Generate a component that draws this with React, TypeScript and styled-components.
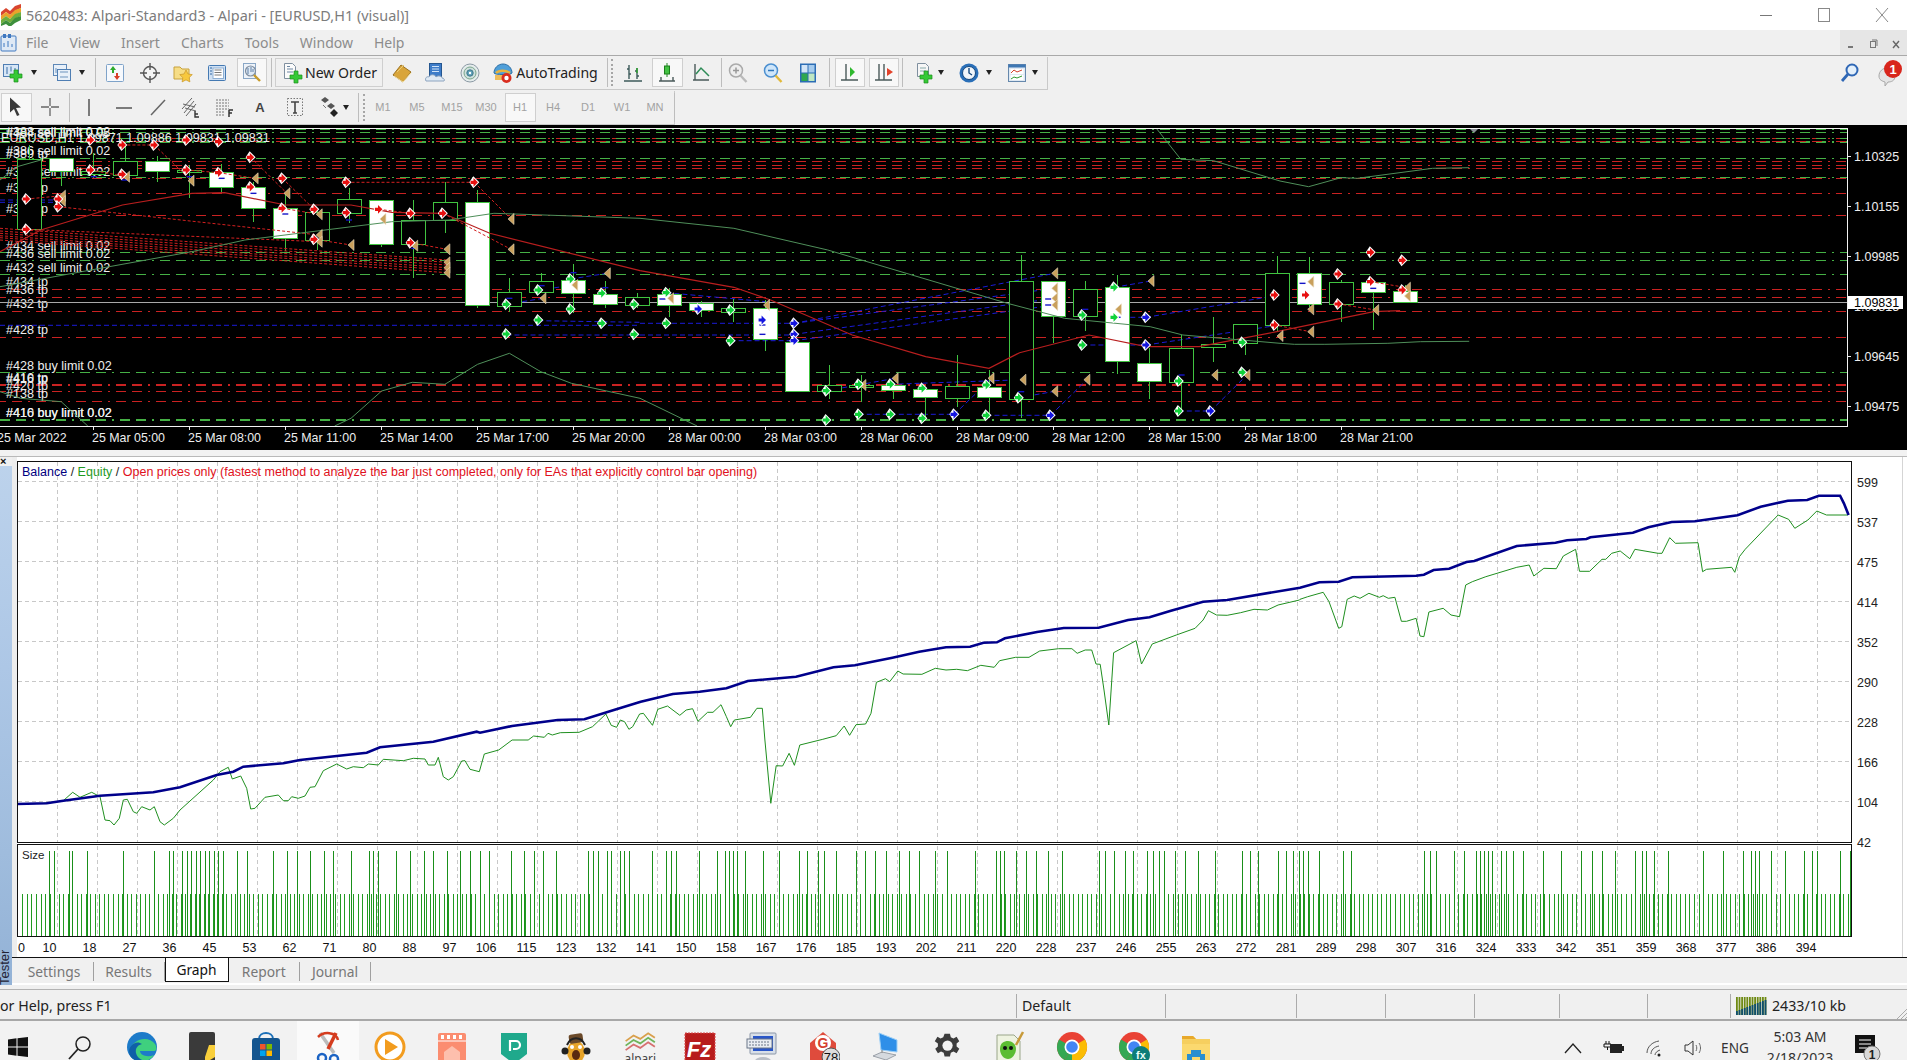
import React from 'react';
import styled, { createGlobalStyle } from 'styled-components';

const Global = createGlobalStyle`
  html, body { margin: 0; padding: 0; background: #f0f0f0; overflow: hidden; }
  #root { width: 1907px; height: 1060px; overflow: hidden; }
  * { box-sizing: border-box; }
`;

const UI = '"Noto Sans", "Liberation Sans", sans-serif';
const TXT = '"Liberation Sans", Arial, sans-serif';

const Page = styled.div`
  width: 1907px; height: 1060px; display: flex; flex-direction: column;
  font-family: ${UI}; background: #f0f0f0; overflow: hidden;
`;
const TitleBar = styled.div`
  height: 30px; background: #fff; display: flex; align-items: center; flex: none;
`;
const TitleLogo = styled.div`width: 20px; height: 22px; margin: 0 5px 0 1px; display: flex;`;
const TitleText = styled.div`font-size: 14.45px; color: #7c7c7c;`;
const WinControls = styled.div`margin-left: auto; display: flex; gap: 8px;`;
const WinBtn = styled.div`width: 50px; height: 24px; display: flex; align-items: center; justify-content: center;`;

const MenuBar = styled.div`
  height: 26px; flex: none; display: flex; align-items: center; background: #f0f0f0;
  border-bottom: 1px solid #a9a9a9;
`;
const MenuIcon = styled.div`width: 26px; display: flex; justify-content: flex-start; height: 22px;`;
const MenuList = styled.div`display: flex; gap: 21px; font-size: 14px; color: #8c8c8c;`;
const MdiBox = styled.div`
  margin-left: auto; width: 67px; height: 25px; background: #e6e6e6; display: flex;
  align-items: center; justify-content: space-around; padding-top: 3px;
`;
const Row = styled.div<{ $h: number }>`
  height: ${p => p.$h}px; flex: none; display: flex; align-items: center; background: #f0f0f0;
`;
const Band = styled.div<{ $w: number }>`
  width: ${p => p.$w}px; height: calc(100% - 1px); display: flex; align-items: center;
  border-bottom: 1px solid #c9c9c9; border-right: 1px solid #c9c9c9;
`;
const Tool = styled.div<{ $w: number; $ml: number; $on?: boolean; $box?: boolean }>`
  width: ${p => p.$w}px; margin-left: ${p => p.$ml}px; height: ${p => (p.$on || p.$box ? '29px' : 'auto')};
  flex: none; display: flex; align-items: center; justify-content: center; gap: 2px;
  background: ${p => (p.$on ? '#f8f8f8' : 'transparent')};
  border: ${p => (p.$on || p.$box ? '1px solid #cfcfcf' : 'none')};
`;
const ToolLabel = styled.span`font-size: 14.1px; color: #222; white-space: nowrap;`;
const PeriodLabel = styled.span`font: 11px ${TXT}; color: #a2a2a2;`;
const Sep = styled.div`width: 1px; height: 29px; background: #bdbdbd;`;
const Grip = styled.div`width: 2px; height: 27px; border-left: 2px dotted #a6a6a6;`;
const Arrow = styled.div`
  width: 0; height: 0; border-left: 3.5px solid transparent; border-right: 3.5px solid transparent;
  border-top: 5px solid #222;
`;
const RightIcons = styled.div`margin-left: auto; display: flex; align-items: center; gap: 16px; padding-right: 2px;`;
const ChartSvg = styled.svg`display: block; flex: none; background: #000;`;
const ChartGap = styled.div`height: 7px; flex: none; background: #f2f2f2; border-bottom: 1px solid #b9b9b9;`;

const Tester = styled.div`height: 528px; flex: none; display: flex; background: #fff;`;
const Rail = styled.div`
  width: 12px; flex: none; position: relative; overflow: hidden;
  background: linear-gradient(#bdd3ec 0, #adc7e6 40%, #9fbcdd 75%, #93b2d6 100%);
`;
const RailClose = styled.div`
  height: 9px; background: #f0f0f0; font: 700 11px/9px ${TXT}; color: #111; padding-left: 0;
`;
const RailLabel = styled.div`
  position: absolute; left: -3px; bottom: 0; writing-mode: vertical-rl; transform: rotate(180deg);
  font: 13px ${TXT}; color: #223; height: 42px;
`;
const TesterMain = styled.div`width: 1895px; display: flex; flex-direction: column;`;
const GraphSvg = styled.svg`display: block; background: #fff; flex: none;`;
const Tabs = styled.div`
  height: 27px; flex: none; display: flex; align-items: flex-start; padding-left: 3.5px;
  background: #f0f0f0; border-top: 1px solid #111; border-bottom: 1px solid #fff;
`;
const Tab = styled.div<{ $w: number; $on?: boolean }>`
  width: ${p => p.$w}px; height: ${p => (p.$on ? '25px' : '19px')}; margin-top: ${p => (p.$on ? '-1px' : '4px')};
  display: flex; align-items: center; justify-content: center; font-size: 13.8px;
  color: ${p => (p.$on ? '#111' : '#777')}; background: ${p => (p.$on ? '#fff' : 'transparent')};
  border: ${p => (p.$on ? '1px solid #111' : 'none')};
  border-right: 1px solid ${p => (p.$on ? '#111' : '#a0a0a0')};
`;
const Spacer = styled.div`height: 5px; flex: none; background: #f0f0f0; border-bottom: 1px solid #b3b3b3;`;
const StatusBar = styled.div`
  height: 31px; flex: none; display: flex; align-items: center; background: #f0f0f0;
  border-bottom: 2px solid #a8a8a8; position: relative; padding-top: 2px;
`;
const Cell = styled.div<{ $w: number }>`
  width: ${p => p.$w}px; height: 24px; flex: none; display: flex; align-items: center; gap: 5px;
  padding-left: 5px; font-size: 14.2px; color: #222; border-left: 1px solid #ababab;
  &:first-child { border-left: none; padding-left: 0; }
`;
const ResizeGrip = styled.div`position: absolute; right: 0; bottom: 0; width: 12px; height: 12px; display: flex;`;

const Taskbar = styled.div`flex: 1; display: flex; background: #f2f2f2; overflow: hidden;`;
const StartBtn = styled.div`width: 49px; padding: 16px 0 0 8px; flex: none;`;
const TaskItem = styled.div<{ $on?: boolean }>`
  width: 62px; height: 60px; flex: none; display: flex; justify-content: center; padding-top: 10px;
  background: ${p => (p.$on ? '#fafafa' : 'transparent')};
`;
const Tray = styled.div`margin-left: auto; display: flex; padding-right: 16px; border-right: none;`;
const TrayItem = styled.div<{ $w: number }>`
  width: ${p => p.$w}px; height: 39px; display: flex; align-items: center; justify-content: center; padding-top: 14px;
  font-size: 13.6px; color: #333;
`;
const Clock = styled.div`
  width: 86px; display: flex; flex-direction: column; align-items: center; font-size: 14px; color: #333;
  line-height: 21px; padding-top: 5px;
`;

/* ============== icons ============== */
const Ico: React.FC<{ s?: number; children: React.ReactNode }> = ({ s = 22, children }) => (
  <svg width={s} height={s} viewBox="0 0 22 22" fill="none">{children}</svg>
);
const Plus = ({ x = 8, y = 8 }: { x?: number; y?: number }) => (
  <path transform={`translate(${x} ${y})`} d="M4 0h4v4h4v4H8v4H4V8H0V4h4z" fill="#35c935" stroke="#1c8c1c" strokeWidth=".7" />
);
const icons: Record<string, React.ReactNode> = {
  add: <Ico><rect x="1.5" y="2.5" width="15" height="12" fill="#d7e6f6" stroke="#4f7eb3" /><path d="M5 5v7M9 4.5v5M13 6v4" stroke="#3a6ea6" /><Plus x={8} y={8} /></Ico>,
  prof: <Ico><rect x="2.5" y="2.5" width="13" height="11" fill="#e8f0f9" stroke="#5e88b7" /><rect x="6.5" y="7.5" width="13" height="11" fill="#e8f0f9" stroke="#4f7eb3" /><path d="M5 6v5M9 10h8M9 15h8" stroke="#6c93bd" /></Ico>,
  market: <Ico><rect x="2.5" y="2.5" width="17" height="17" rx="1" fill="#f6f9fd" stroke="#7fa3c9" /><path d="M9 4l3 4h-2v3H8V8H6z" fill="#2dab2d" /><path d="M13 18l-3-4h2v-3h2v3h2z" fill="#d8402a" /></Ico>,
  nav: <Ico><circle cx="11" cy="11" r="6.5" stroke="#555" strokeWidth="1.4" fill="#f5f5f5" /><path d="M11 1v7M11 14v7M1 11h7M14 11h7" stroke="#555" strokeWidth="1.4" /></Ico>,
  folder: <Ico><path d="M2 5h6l2 2h7v10H2z" fill="#f6dd86" stroke="#c8a23c" /><path d="M14 8l2 4 4.3.6-3.1 3 .7 4.3-3.9-2-3.9 2 .7-4.3-3.1-3 4.3-.6z" fill="#f7c83e" stroke="#c8962a" strokeWidth=".7" /></Ico>,
  term: <Ico><rect x="2.5" y="3.5" width="17" height="15" rx="1" fill="#cfe0f3" stroke="#4479b2" /><rect x="7" y="6" width="10.5" height="10.5" fill="#fff" stroke="#8fb0d3" /><path d="M8.5 8h7M8.5 10.5h7M8.5 13h7" stroke="#7a7a7a" /><path d="M4 6h2M4 9h2M4 12h2" stroke="#2f66a3" /></Ico>,
  tester: <Ico><rect x="2.5" y="1.5" width="12" height="15" fill="#eef3f9" stroke="#8aa7c6" /><circle cx="9.5" cy="9" r="5" fill="#dfeaf5" stroke="#7f8ea0" strokeWidth="1.2" /><path d="M7 6v6M10 5v5M12 7v3" stroke="#5e7ea5" /><path d="M13 13l6 6" stroke="#c79b2a" strokeWidth="2.4" /></Ico>,
  order: <Ico><path d="M3.5 1.5h8l3 3v12h-11z" fill="#fbfbfb" stroke="#7f8f9f" /><path d="M6 7h6M6 10h6M6 4.500h3" stroke="#6d87a3" /><Plus x={9} y={9} /></Ico>,
  meta: <Ico><path d="M2 13l8-10 10 7-8 10z" fill="#d9a53a" stroke="#9c7320" /><path d="M3 14l9 6M12 20l8-9" stroke="#f6e2a5" /><path d="M6 10l7-7" stroke="#eccc75" /></Ico>,
  cloud: <Ico><rect x="5.5" y="1.5" width="12" height="13" fill="#3d7cc9" stroke="#25568f" /><path d="M8 4.500h7M8 7h7M8 9.500h7" stroke="#cfe3f8" /><path d="M2 19c-1.500-3 1-5 3-4 1-3 6-3 7 0 2-2 6-1 6 1 2 0 3 2 2 3z" fill="#dfe9f4" stroke="#8da4bf" /></Ico>,
  signal: <Ico><circle cx="11" cy="11" r="9" fill="#e5ecec" stroke="#8c9aa5" /><circle cx="11" cy="11" r="6" fill="#cfe0dc" stroke="#7ba68c" /><circle cx="11" cy="11" r="3.2" fill="#5da0b8" stroke="#42798c" /><circle cx="11" cy="11" r="1.2" fill="#fff" /></Ico>,
  auto: <Ico><path d="M2 11c0-5 4-9 9-9s9 4 9 9c0 2-18 2-18 0z" fill="#4f9fd9" stroke="#2a6ea6" /><path d="M4 11c3-3 10-3 14 0" stroke="#e9b33c" strokeWidth="2.4" /><path d="M3 13h15v5H3z" fill="#eebc5a" /><circle cx="14.5" cy="16" r="5" fill="#d92d1f" /><circle cx="14.5" cy="16" r="2.2" fill="#fff" /></Ico>,
  bars: <Ico><path d="M7 3v14M5 7h2M7 12h2M15 6v11M13 9h2M15 14h2M2 19h18" stroke="#3c5a5a" strokeWidth="1.4" /><path d="M15 6v5" stroke="#2aa52a" strokeWidth="1.4" /></Ico>,
  candle: <Ico><path d="M11 1v14" stroke="#278827" /><rect x="8.5" y="4" width="5" height="8" fill="#43c343" stroke="#1c7d1c" /><path d="M3 19h16M5 15v4M17 15v4" stroke="#4a5a5a" strokeWidth="1.4" /></Ico>,
  line: <Ico><path d="M4 2v16M2 18h16" stroke="#4a5a5a" strokeWidth="1.4" /><path d="M5 12l5-6 5 5 3 3" stroke="#2e8b57" strokeWidth="1.5" /></Ico>,
  zin: <Ico><circle cx="9" cy="8.5" r="6.5" fill="#eee" stroke="#aaa" strokeWidth="1.5" /><path d="M6 8.500h6M9 5.500v6" stroke="#999" strokeWidth="1.5" /><path d="M13.500 13.500l6 6.500" stroke="#bbb" strokeWidth="2.4" /></Ico>,
  zout: <Ico><circle cx="9" cy="8.5" r="6.5" fill="#cfe6fa" stroke="#4b8fd0" strokeWidth="1.5" /><path d="M6 8.500h6" stroke="#2f76bb" strokeWidth="1.5" /><path d="M13.500 13.500l6 6.500" stroke="#e2b93a" strokeWidth="2.4" /></Ico>,
  tile: <Ico><rect x="3" y="1.5" width="16" height="19" fill="#2c6db5" /><rect x="4.5" y="3" width="6" height="7.5" fill="#d3e5f7" /><rect x="11.5" y="3" width="6" height="7.5" fill="#a5cbee" /><rect x="4.5" y="11.5" width="6" height="7.5" fill="#2fa84f" /><rect x="11.5" y="11.5" width="6" height="7.5" fill="#bfe7c3" /></Ico>,
  shift: <Ico><path d="M7 2v16M2 18h17" stroke="#4a5a5a" strokeWidth="1.4" /><path d="M11 5l5 5-5 5z" fill="#2fb82f" /></Ico>,
  scroll: <Ico><path d="M6 2v16M11 2v16M2 18h17" stroke="#4a5a5a" strokeWidth="1.4" /><path d="M20 10l-6-4v8z" fill="#e2422a" /></Ico>,
  ind: <Ico><path d="M4.500 1.500h8l3 3v10h-11z" fill="#f6f6f6" stroke="#7f8f9f" /><path d="M7 6h6M7 9h6" stroke="#8aa" /><Plus x={7} y={9} /></Ico>,
  clock: <Ico><circle cx="11" cy="11" r="9.5" fill="#2a6fb8" /><circle cx="11" cy="11" r="6.5" fill="#f1f6fb" stroke="#16497f" /><path d="M11 6v5l3 2" stroke="#16497f" strokeWidth="1.4" /></Ico>,
  tmpl: <Ico><rect x="2.5" y="2.5" width="17" height="17" fill="#dfe9f3" stroke="#6688ac" /><rect x="2.5" y="2.5" width="17" height="3" fill="#3e77b3" /><rect x="4.5" y="7" width="13" height="5" fill="#fff" /><rect x="4.5" y="13" width="13" height="5" fill="#fff" /><path d="M5 11l3-3 3 2 5-2" stroke="#d2402a" /><path d="M5 17l3-2 3 1 5-2" stroke="#2f9a2f" /></Ico>,
  cursor: <Ico><path d="M5 1.500l11 10-5 .5 3.500 7-2.500 1-3-7-4 3.500z" fill="#3a3a3a" /></Ico>,
  cross: <Ico><path d="M11 2v8M11 12v8M2 11h8M12 11h8" stroke="#666" strokeWidth="1.3" /></Ico>,
  vline: <Ico><path d="M11 3v17" stroke="#555" strokeWidth="1.5" /></Ico>,
  hline: <Ico><path d="M3 12h16" stroke="#555" strokeWidth="1.5" /></Ico>,
  trend: <Ico><path d="M4 19L18 4" stroke="#666" strokeWidth="1.5" /></Ico>,
  fibc: <Ico><path d="M2 13L12 2M4 17L14 5M6 20L16 8M3 8l12 3M5 12l11 3" stroke="#666" /><path d="M15 15v6h4M15 18h3" stroke="#333" strokeWidth="1.4" /></Ico>,
  fib: <Ico><path d="M2 4h13M2 7h13M2 10h13M2 13h13M2 16h8M2 19h8" stroke="#777" strokeDasharray="2 1" /><path d="M15 14v7M15 14h4M15 17h3" stroke="#333" strokeWidth="1.5" /></Ico>,
  tbox: <Ico><rect x="3.5" y="2.5" width="15" height="17" stroke="#777" strokeDasharray="1.5 1.5" /><path d="M7 6h8M11 6v11M9 17h4" stroke="#444" strokeWidth="1.6" /></Ico>,
  arrows: <Ico><path d="M3 4l4-3 4 3-4 3zM9 10l4-3 4 3-4 3z" fill="#555" /><path d="M12 17l4-4 4 4-4 4z" fill="#222" /><path d="M5 9l3 3" stroke="#777" /></Ico>,
  search: <Ico><circle cx="13" cy="8" r="5.5" fill="#e4f0fb" stroke="#2f67b5" strokeWidth="2" /><path d="M9 12l-6 7" stroke="#2f67b5" strokeWidth="2.8" /></Ico>,
};
const AText = styled.span`font: 700 13px ${TXT}; color: #444;`;

const Bell = () => (
  <svg width="28" height="30" viewBox="0 0 28 30" fill="none">
    <path d="M2 18c0-5 4-8 8-8s8 3 8 8-4 6-7 6l-3 4v-4c-3-1-6-2-6-6z" fill="#e4e4e4" stroke="#a8a8a8" />
    <circle cx="16" cy="11" r="9" fill="#d8261c" />
    <text x="16" y="15.5" textAnchor="middle" fontSize="13" fontWeight="700" fill="#fff" fontFamily={TXT}>1</text>
  </svg>
);

type Item = { c: number; w: number; node: React.ReactNode; on?: boolean; box?: boolean };
const I = (c: number, k: string, w = 24, on = false): Item => ({ c, w, on, node: icons[k] });
const D = (c: number): Item => ({ c, w: 8, node: <Arrow /> });
const S = (c: number): Item => ({ c, w: 1, node: <Sep /> });
const G = (c: number): Item => ({ c, w: 2, node: <Grip /> });
const P = (c: number, t: string, on = false): Item => ({ c, w: on ? 31 : 28, on, node: <PeriodLabel>{t}</PeriodLabel> });

const row1: Item[] = [
  I(13, 'add'), D(34), I(62, 'prof'), D(82), S(95), I(115, 'market'), I(150, 'nav'), I(183, 'folder'), I(217, 'term'),
  I(252, 'tester', 30, true), S(271),
  { c: 329, w: 108, box: true, node: <>{icons.order}<ToolLabel>New Order</ToolLabel></> },
  I(402, 'meta'), I(435, 'cloud'), I(470, 'signal'),
  { c: 545, w: 118, node: <>{icons.auto}<ToolLabel>AutoTrading</ToolLabel></> },
  S(607), G(612), I(633, 'bars'), I(667, 'candle', 31, true), I(702, 'line'), S(721), I(738, 'zin'), I(773, 'zout'),
  I(808, 'tile'), S(829), I(850, 'shift', 30, true), I(884, 'scroll', 30, true), S(902), I(924, 'ind'), D(941),
  I(969, 'clock'), D(989), I(1017, 'tmpl'), D(1035),
];
const row2: Item[] = [
  I(16, 'cursor', 31, true), I(50, 'cross'), S(69), I(89, 'vline'), I(124, 'hline'), I(158, 'trend'), I(191, 'fibc'),
  I(225, 'fib'), { c: 260, w: 22, node: <AText>A</AText> }, I(295, 'tbox'), I(329, 'arrows'), D(346), S(358), G(364),
  P(383, 'M1'), P(417, 'M5'), P(452, 'M15'), P(486, 'M30'), P(520, 'H1', true), P(553, 'H4'), P(588, 'D1'), P(622, 'W1'), P(655, 'MN'), S(674),
];
const ToolItems: React.FC<{ items: Item[] }> = ({ items }) => {
  let end = 0;
  return <>{items.map((it, i) => {
    const ml = it.c - it.w / 2 - end;
    end = it.c + it.w / 2;
    return <Tool key={i} $w={it.w} $ml={ml} $on={it.on} $box={it.box}>{it.node}</Tool>;
  })}</>;
};

/* ============== price chart data ============== */
type Pt = [number, number];
const z3 = (p: Pt): Pt => [p[0] / 2.45, 125 + p[1] / 3];
const z4 = (p: Pt): Pt => [640 + p[0] / 2.45, 125 + p[1] / 3];
const z5 = (p: Pt): Pt => [1270 + p[0] / 2.46, 125 + p[1] / 3];
const toD = (pts: Pt[]) => 'M' + pts.map(p => `${p[0].toFixed(1)} ${p[1].toFixed(1)}`).join('L');

const candles: [number, 'w' | 'h', number, number, number, number][] = [
  [0, 'h', 102, 312, 60, 315], [1, 'w', 98, 137, 98, 182], [2, 'h', 137, 147, 85, 160], [3, 'h', 107, 150, 60, 165],
  [4, 'w', 108, 137, 92, 170], [5, 'h', 136, 142, 120, 220], [6, 'w', 142, 185, 118, 205], [7, 'w', 187, 250, 170, 292],
  [8, 'w', 250, 340, 205, 378], [9, 'h', 260, 345, 255, 375], [10, 'h', 223, 263, 190, 295], [11, 'w', 224, 358, 224, 365],
  [12, 'h', 285, 356, 225, 458], [13, 'h', 232, 286, 170, 325], [14, 'w', 230, 541, 195, 548], [15, 'h', 500, 542, 460, 560],
  [16, 'h', 469, 500, 445, 505], [17, 'w', 466, 505, 418, 565], [18, 'w', 508, 538, 468, 550], [19, 'h', 516, 540, 505, 548],
  [20, 'w', 508, 541, 490, 575], [21, 'w', 534, 555, 528, 575], [22, 'h', 550, 560, 522, 590], [23, 'w', 550, 643, 525, 677],
  [24, 'w', 650, 798, 648, 800], [25, 'h', 781, 798, 720, 822], [26, 'h', 780, 785, 750, 830], [27, 'w', 781, 794, 770, 822],
  [28, 'w', 793, 817, 793, 882], [29, 'h', 782, 818, 690, 845], [30, 'w', 785, 817, 735, 880], [31, 'h', 469, 821, 390, 880],
  [32, 'w', 469, 574, 469, 655], [33, 'h', 491, 572, 468, 618], [34, 'w', 487, 709, 450, 748], [35, 'w', 713, 769, 670, 822],
  [36, 'h', 670, 770, 630, 860], [37, 'h', 656, 666, 577, 710], [38, 'h', 598, 655, 598, 690], [39, 'h', 445, 601, 392, 620],
  [40, 'w', 443, 538, 397, 545], [41, 'h', 472, 538, 465, 590], [42, 'w', 472, 500, 472, 615], [43, 'w', 497, 531, 480, 535],
];
const hLines: [number, 'g' | 'r', number?][] = [
  [12, 'g'], [22, 'g'], [40, 'r'], [40, 'g'], [47, 'g'], [47, 'r'], [52, 'g'], [98, 'g'], [108, 'r'], [120, 'r'], [130, 'r'],
  [155, 'g'], [158, 'r'], [205, 'r'], [269, 'r'], [382, 'g'], [406, 'g'], [448, 'g'], [491, 'r'], [515, 'r'], [557, 'r'], [635, 'r'],
  [742, 'g'], [776, 'r', 2], [798, 'r'], [827, 'r'], [883, 'g', 2],
];
const redMA: Pt[] = ([[0, 380], [100, 315], [300, 240], [470, 205], [550, 203], [700, 240], [860, 240], [960, 262], [1085, 265], [1200, 325], [1568, 437]] as Pt[]).map(z3)
  .concat(([[230, 487], [320, 525], [520, 630], [700, 695], [855, 730], [930, 683], [1100, 630], [1240, 665], [1370, 665], [1560, 620]] as Pt[]).map(z4))
  .concat(([[255, 560], [320, 557]] as Pt[]).map(z5));
const midMA: Pt[] = ([[0, 485], [200, 440], [470, 380], [600, 345], [960, 290], [1100, 285], [1210, 265], [1568, 280]] as Pt[]).map(z3)
  .concat(([[230, 310], [460, 375], [900, 535], [1040, 580], [1250, 605], [1330, 630], [1568, 655]] as Pt[]).map(z4))
  .concat(([[60, 658], [135, 658], [290, 655], [370, 650], [490, 649]] as Pt[]).map(z5));
const upBand1: Pt[] = ([[0, 165], [42, 125], [100, 105]] as Pt[]).map(z3);
const upBand2: Pt[] = ([[1265, 10], [1325, 103], [1405, 107], [1568, 168]] as Pt[]).map(z4)
  .concat(([[95, 185], [175, 158], [215, 160], [400, 130], [490, 128]] as Pt[]).map(z5));
const lowBand1: Pt[] = ([[0, 800], [50, 820], [150, 830], [215, 903]] as Pt[]).map(z3);
const lowBand2: Pt[] = ([[820, 903], [860, 880], [935, 798], [1010, 772], [1090, 778], [1170, 718], [1248, 685], [1325, 740], [1400, 775], [1568, 820]] as Pt[]).map(z3)
  .concat(([[140, 903]] as Pt[]).map(z4));

const redMarks: Pt[] = ([[222, 45], [300, 60], [378, 60], [457, 45], [536, 50], [614, 97], [222, 135], [300, 148], [457, 135], [536, 143], [692, 160], [849, 172], [1162, 172], [614, 186], [65, 222], [143, 222], [143, 245], [692, 250], [770, 253], [849, 263], [928, 253], [1006, 265], [1085, 265], [65, 313], [770, 343], [1006, 353]] as Pt[]).map(z3)
  .concat(([[1555, 510], [1555, 600]] as Pt[]).map(z4))
  .concat(([[248, 382], [326, 406], [168, 447], [248, 470], [326, 495], [88, 510], [168, 537]] as Pt[]).map(z5));
const tanMarks: Pt[] = ([[153, 212], [153, 228], [310, 155], [468, 167], [625, 160], [703, 205], [782, 268], [782, 330], [782, 350], [860, 360], [938, 282], [1016, 362], [1095, 373], [1095, 412], [1095, 428], [1095, 443], [1252, 282], [1252, 373], [1330, 520], [1408, 480], [1488, 445]] as Pt[]).map(z3)
  .concat(([[75, 520], [310, 540], [546, 780], [625, 760], [860, 760], [938, 764], [1016, 445], [1016, 490], [1016, 520], [1016, 540], [1016, 799], [1095, 764], [1172, 553], [1252, 468], [1408, 750], [1487, 750], [1568, 633]] as Pt[]).map(z4))
  .concat(([[100, 470], [338, 488], [338, 513], [100, 553], [260, 555], [100, 620]] as Pt[]).map(z5));
const greenMarks: Pt[] = ([[1398, 462], [1319, 495], [1475, 505], [1241, 538], [1554, 538], [1398, 552], [1319, 585], [1475, 595], [1241, 627], [1554, 628]] as Pt[]).map(z3)
  .concat(([[65, 503], [222, 555], [65, 595], [222, 647], [457, 797], [536, 778], [614, 778], [692, 790], [849, 780], [928, 818], [1084, 570], [1162, 487], [1162, 577], [1084, 660], [1320, 768], [1476, 652], [1476, 742], [536, 868], [614, 868], [692, 880], [849, 871], [1320, 858], [457, 885]] as Pt[]).map(z4));
const blueMarks: Pt[] = ([[143, 552], [300, 585], [378, 595], [378, 628], [378, 647], [770, 868], [1006, 871], [1398, 858], [1240, 577], [1240, 660]] as Pt[]).map(z4);
const ticks: Pt[] = ([[699, 267], [621, 205], [543, 160], [1015, 370], [230, 155], [305, 165], [855, 285], [465, 155], [1248, 520], [1327, 482], [1405, 443], [1483, 488]] as Pt[]).map(z3)
  .concat(([[1327, 750], [1091, 553], [1170, 577], [1000, 522], [1000, 540], [934, 800], [55, 522], [300, 600], [300, 628]] as Pt[]).map(z4))
  .concat(([[254, 490], [80, 475]] as Pt[]).map(z5));

const seg = (f: (p: Pt) => Pt, a: Pt, b: Pt): [Pt, Pt] => [f(a), f(b)];
const blueDash: [Pt, Pt][] = [
  seg(z3, [0, 225], [140, 225]), seg(z3, [0, 232], [140, 232]), seg(z3, [0, 601], [1568, 601]), seg(z3, [1241, 630], [1568, 630]),
  seg(z3, [1319, 587], [1568, 592]), seg(z4, [0, 595], [378, 595]), seg(z4, [0, 630], [378, 630]), seg(z4, [222, 647], [378, 647]),
  seg(z4, [536, 868], [770, 868]), seg(z4, [849, 871], [1006, 871]), seg(z4, [1320, 858], [1398, 858]), seg(z4, [1162, 577], [1240, 577]),
  seg(z4, [1084, 660], [1240, 660]), seg(z4, [770, 868], [860, 762]), seg(z4, [1006, 871], [1095, 764]), seg(z4, [1398, 858], [1487, 750]),
  seg(z4, [378, 595], [1016, 445]), seg(z4, [378, 595], [1016, 490]), seg(z4, [378, 628], [1016, 520]), seg(z4, [378, 647], [1016, 540]),
  seg(z4, [65, 503], [310, 530]), seg(z4, [928, 818], [1016, 799]), seg(z4, [1162, 487], [1252, 468]), seg(z4, [1240, 577], [1568, 510]),
  seg(z4, [1240, 660], [1568, 600]), seg(z4, [457, 797], [625, 760]), seg(z4, [614, 778], [938, 764]),
  seg(z3, [1241, 538], [1330, 520]), seg(z3, [1398, 462], [1488, 445]), seg(z3, [1319, 495], [1408, 480]),
];
const redDash: [Pt, Pt][] = [
  seg(z3, [65, 222], [153, 212]), seg(z3, [143, 245], [782, 330]), seg(z3, [65, 313], [782, 350]), seg(z3, [0, 310], [1095, 405]),
  seg(z3, [0, 318], [1095, 412]), seg(z3, [0, 325], [1095, 420]), seg(z3, [0, 332], [1095, 428]), seg(z3, [0, 338], [1095, 435]),
  seg(z3, [0, 345], [1095, 443]), seg(z3, [300, 60], [378, 60]), seg(z3, [378, 60], [468, 167]), seg(z3, [536, 143], [625, 160]),
  seg(z3, [692, 250], [782, 268]), seg(z3, [849, 172], [1162, 172]), seg(z3, [1162, 172], [1252, 282]), seg(z3, [1085, 265], [1252, 373]),
  seg(z3, [614, 97], [703, 205]), seg(z3, [770, 343], [860, 360]), seg(z3, [1006, 353], [1095, 373]), seg(z3, [928, 253], [1006, 265]),
  seg(z3, [222, 135], [310, 155]), seg(z3, [457, 135], [536, 143]), seg(z3, [692, 160], [782, 268]),
  seg(z5, [168, 537], [260, 555]), seg(z5, [248, 470], [338, 488]), seg(z5, [10, 600], [100, 620]),
];

const chartLabels: [number, string][] = [
  [22, '#404 sell limit 0.05'], [20, '#388 sell limit 0.02'], [38, 'EURUSD,H1  1.09871 1.09886 1.09831 1.09831'],
  [77, '#386 sell limit 0.02'], [85, '#389 tp'], [140, '#390 sell limit 0.02'], [187, '#385 tp'], [250, '#384 tp'],
  [360, '#434 sell limit 0.02'], [385, '#436 sell limit 0.02'], [428, '#432 sell limit 0.02'], [468, '#434 tp'], [493, '#436 tp'],
  [536, '#432 tp'], [613, '#428 tp'], [722, '#428 buy limit 0.02'], [757, '#410 tp'], [760, '#416 tp'], [782, '#420 tp'], [805, '#138 tp'],
  [862, '#416 buy limit 0.02'], [863, '#410 buy limit 0.02'],
];
const times = ['25 Mar 05:00', '25 Mar 08:00', '25 Mar 11:00', '25 Mar 14:00', '25 Mar 17:00', '25 Mar 20:00', '28 Mar 00:00', '28 Mar 03:00', '28 Mar 06:00', '28 Mar 09:00', '28 Mar 12:00', '28 Mar 15:00', '28 Mar 18:00', '28 Mar 21:00'];
const prices: [number, string][] = [[157, '1.10325'], [207, '1.10155'], [257, '1.09985'], [357, '1.09645'], [407, '1.09475']];

const GREEN = '#40c440';
const DASH = '10 6 10 6 2 6';

const MarkArrow: React.FC<{ p: Pt; fill: string }> = ({ p, fill }) => (
  <g transform={`translate(${p[0].toFixed(1)} ${p[1].toFixed(1)})`}>
    <polygon points="-1,-6 5,0 -1,6 -5,0" fill="#fff" />
    <path d="M-3.8 -1.6H-.8V-4.4L3.6 0 -.8 4.4V1.6H-3.8z" fill={fill} />
  </g>
);
const MarkTan: React.FC<{ p: Pt }> = ({ p }) => (
  <polygon transform={`translate(${p[0].toFixed(1)} ${p[1].toFixed(1)})`} points="3,-5.5 3,5.5 -3,0" fill="#c9a05c" stroke="#eadcc0" strokeWidth=".6" />
);

const PriceChart: React.FC = () => (
  <ChartSvg width={1907} height={325} viewBox="0 125 1907 325" fontFamily={TXT}>
    {hLines.map(([y, c, w], i) => (
      <line key={i} x1={0} x2={1847} y1={Math.round(125 + y / 3) + .5} y2={Math.round(125 + y / 3) + .5}
        stroke={c === 'g' ? '#45b045' : '#c92222'} strokeWidth={w || 1} strokeDasharray={DASH} strokeDashoffset={c === 'g' ? 0 : 4} shapeRendering="crispEdges" />
    ))}
    {chartLabels.map(([y, t], i) => (
      <text key={i} x={i === 2 ? 1 : 6} y={125 + y / 3 + 4.5} fontSize="12.6" fill="#eee">{t}</text>
    ))}
    <line x1={0} x2={1847} y1={302.5} y2={302.5} stroke="#a8a8a8" shapeRendering="crispEdges" />
    {blueDash.map((s, i) => <path key={i} d={toD(s)} stroke="#1b1bd8" strokeDasharray="5 3" fill="none" />)}
    {candles.map(([i, t, top, bot, wt, wb]) => {
      const x = Math.round(29.4 + 32 * i) + .5;
      const y1 = Math.round(125 + top / 3) + .5; const y2 = Math.round(125 + bot / 3) + .5;
      return (
        <g key={i} shapeRendering="crispEdges">
          <line x1={x} x2={x} y1={125 + wt / 3} y2={125 + wb / 3} stroke={GREEN} />
          <rect x={x - 12} y={y1} width={24} height={Math.max(y2 - y1, 1)} fill={t === 'w' ? '#fff' : '#000'} stroke={GREEN} />
        </g>
      );
    })}
    {redDash.map((s, i) => <path key={i} d={toD(s)} stroke="#d42020" strokeDasharray="3 2" fill="none" />)}
    <path d={toD(redMA)} fill="none" stroke="#b81e1e" strokeWidth="1.2" />
    {[midMA, upBand1, upBand2, lowBand1, lowBand2].map((b, i) => <path key={i} d={toD(b)} fill="none" stroke="#4f8f5a" />)}
    {ticks.map((p, i) => <line key={i} x1={p[0] - 3} x2={p[0] + 3} y1={p[1]} y2={p[1]} stroke="#1414c8" strokeWidth="1.4" />)}
    {tanMarks.map((p, i) => <MarkTan key={i} p={p} />)}
    {redMarks.map((p, i) => <MarkArrow key={i} p={p} fill="#e80f0f" />)}
    {greenMarks.map((p, i) => <MarkArrow key={i} p={p} fill="#0fd23a" />)}
    {blueMarks.map((p, i) => <MarkArrow key={i} p={p} fill="#1414e0" />)}
    <path d="M1469 128l5 5 5-5z" fill="#8a8f95" />
    <path d="M0 128.500H1847.500V426.500H0" fill="none" stroke="#f2f2f2" shapeRendering="crispEdges" />
    {prices.map(([y, t]) => (
      <g key={t}>
        <line x1={1847} x2={1851} y1={y - .5} y2={y - .5} stroke="#eee" />
        <text x={1854} y={y + 4} fontSize="12.5" fill="#eee">{t}</text>
      </g>
    ))}
    <text x={1854} y={311} fontSize="12.5" fill="#eee">1.09815</text>
    <rect x={1848} y={296} width={55} height={13} fill="#fff" />
    <text x={1854} y={307} fontSize="12.5" fill="#000">1.09831</text>
    <text x={-3} y={442} fontSize="12.4" fill="#eee">25 Mar 2022</text>
    {times.map((t, i) => (
      <g key={t}>
        <line x1={93.5 + 96 * i} x2={93.5 + 96 * i} y1={427} y2={430} stroke="#eee" />
        <text x={92 + 96 * i} y={442} fontSize="12.4" fill="#eee">{t}</text>
      </g>
    ))}
  </ChartSvg>
);

/* ============== tester graph data ============== */
const zA = (p: Pt): Pt => [p[0] / 3, 460 + p[1] / 3];
const zB = (p: Pt): Pt => [480 + p[0] / 1.867, 600 + p[1] / 3];
const zC = (p: Pt): Pt => [1300 + p[0] / 2.583, 460 + p[1] / 3];
const balance: Pt[] = ([[52, 1032], [140, 1030], [190, 1022], [300, 1007], [460, 997], [540, 982], [650, 945], [700, 935], [730, 920], [850, 910], [900, 900], [1100, 878], [1140, 862], [1300, 845], [1430, 815]] as Pt[]).map(zA)
  .concat(([[0, 398], [60, 378], [145, 360], [195, 358], [250, 330], [300, 305], [360, 282], [410, 275], [460, 265], [500, 243], [590, 230], [660, 202], [700, 196], [770, 173], [820, 155], [870, 142], [915, 140], [940, 128], [965, 127], [980, 115], [1040, 96], [1090, 84], [1155, 83], [1210, 60], [1250, 52], [1290, 32], [1350, 5], [1395, 0]] as Pt[]).map(zB))
  .concat(([[0, 383], [50, 367], [100, 365], [135, 352], [300, 347], [320, 344], [345, 330], [385, 326], [430, 306], [450, 303], [560, 258], [660, 248], [690, 241], [740, 237], [750, 232], [860, 218], [900, 202], [960, 186], [1020, 184], [1130, 166], [1190, 140], [1230, 130], [1260, 122], [1310, 120], [1340, 107], [1395, 107], [1405, 130], [1417, 165]] as Pt[]).map(zC));
const equity: Pt[] = ([[52, 1032], [130, 1030], [190, 1022], [218, 997], [240, 1012], [275, 997], [300, 1010], [315, 1080], [330, 1082], [342, 1095], [358, 1075], [370, 1020], [382, 1018], [400, 1055], [410, 1060], [425, 1040], [450, 1050], [463, 1040], [480, 1085], [493, 1095], [520, 1075], [540, 1050], [640, 960], [660, 935], [685, 922], [697, 957], [722, 948], [740, 985], [752, 1047], [765, 1045], [795, 1012], [835, 1005], [850, 1022], [865, 1022], [875, 1010], [895, 1015], [915, 1008], [930, 982], [945, 980], [970, 932], [1010, 912], [1040, 927], [1060, 920], [1090, 923], [1105, 912], [1135, 915], [1150, 898], [1210, 902], [1240, 895], [1275, 897], [1285, 915], [1305, 915], [1315, 892], [1330, 950], [1345, 960], [1360, 950], [1385, 903], [1395, 902], [1410, 928], [1438, 935]] as Pt[]).map(zA)
  .concat(([[8, 462], [35, 450], [60, 420], [90, 420], [100, 408], [120, 412], [127, 400], [135, 405], [150, 398], [185, 397], [210, 380], [235, 342], [245, 376], [255, 382], [262, 360], [270, 365], [278, 388], [285, 380], [298, 342], [305, 340], [322, 376], [332, 328], [350, 318], [373, 346], [385, 330], [397, 326], [407, 364], [425, 337], [435, 337], [450, 314], [460, 350], [468, 380], [475, 360], [505, 352], [517, 325], [527, 325], [532, 420], [543, 610], [553, 497], [565, 498], [577, 460], [587, 496], [597, 435], [640, 418], [665, 407], [680, 378], [690, 406], [702, 374], [720, 372], [730, 340], [740, 247], [757, 236], [765, 245], [780, 213], [790, 222], [825, 223], [850, 205], [870, 210], [890, 208], [910, 212], [935, 196], [960, 202], [970, 182], [1000, 172], [1025, 172], [1045, 153], [1080, 146], [1105, 146], [1115, 160], [1130, 150], [1142, 150], [1150, 192], [1158, 193], [1165, 270], [1174, 375], [1183, 158], [1225, 122], [1235, 192], [1255, 132], [1300, 105], [1335, 85], [1350, 60], [1360, 32], [1375, 45], [1395, 46], [1420, 38], [1445, 28], [1470, 30], [1490, 15], [1530, 0]] as Pt[]).map(zB))
  .concat(([[0, 418], [20, 410], [60, 397], [75, 425], [100, 505], [108, 500], [122, 418], [140, 408], [155, 415], [178, 400], [205, 412], [215, 407], [228, 415], [245, 412], [262, 484], [275, 484], [300, 475], [310, 528], [320, 530], [333, 456], [370, 445], [390, 465], [412, 470], [428, 375], [445, 365], [480, 350], [560, 322], [592, 315], [604, 348], [630, 325], [662, 326], [680, 288], [712, 268], [722, 334], [748, 334], [780, 298], [790, 298], [805, 280], [827, 273], [852, 296], [865, 268], [925, 280], [935, 280], [955, 233], [970, 250], [1028, 248], [1040, 335], [1050, 328], [1115, 322], [1123, 337], [1135, 290], [1150, 268], [1235, 165], [1262, 178], [1278, 205], [1312, 180], [1335, 153], [1360, 165], [1415, 165]] as Pt[]).map(zC));

const hiA = [120, 133, 168, 177, 212, 302, 378, 413, 424, 447, 458, 468, 480, 491, 502, 513, 525, 535, 547, 581, 604, 670, 703, 727, 760, 793, 816, 860, 905, 915, 925, 970, 1005, 1040, 1062, 1096, 1128, 1152, 1175, 1197, 1252, 1285, 1308, 1330, 1363, 1441, 1452, 1464, 1487, 1497, 1520, 1530, 1540];
const hiB = [15, 32, 38, 44, 73, 95, 105, 110, 115, 120, 130, 152, 172, 197, 207, 220, 228, 243, 267, 279, 291, 305, 320, 333, 345, 365, 380, 414, 440, 445, 450, 465, 478, 490, 505, 522, 568, 575, 587, 600, 610, 628, 635, 642, 648, 662, 675, 690, 712, 745, 755, 765, 790, 800, 808, 815, 820, 827, 840, 870, 880, 970, 978, 985, 1007, 1020, 1035, 1040, 1045, 1050, 1055, 1065, 1072, 1080, 1093, 1118, 1140, 1165, 1178, 1190, 1207, 1232, 1240, 1245, 1255, 1272, 1315, 1340, 1365, 1375, 1380, 1385, 1400, 1417, 1440, 1450, 1457, 1485, 1497];
const hiBars = hiA.map(x => Math.round(x / 2.45)).concat(hiB.map(x => Math.round(640 + x / 1.2376)));
const lowBars: number[] = [];
for (let k = 0; k < 404; k++) lowBars.push(Math.round(22.4 + 4.53 * k));

const eqTicks: [number, string][] = [[482, '599'], [522, '537'], [562, '475'], [602, '414'], [642, '352'], [682, '290'], [722, '228'], [762, '166'], [802, '104']];
const xLabels = ['10', '18', '27', '36', '45', '53', '62', '71', '80', '88', '97', '106', '115', '123', '132', '141', '150', '158', '167', '176', '185', '193', '202', '211', '220', '228', '237', '246', '255', '263', '272', '281', '289', '298', '307', '316', '324', '333', '342', '351', '359', '368', '377', '386', '394'];
const gridX: number[] = [];
for (let x = 57.5; x < 1850; x += 40) gridX.push(x);

const TestGraph: React.FC = () => (
  <GraphSvg width={1895} height={500} viewBox="12 457 1895 500" fontFamily={TXT}>
    <rect x={12} y={457} width={5} height={500} fill="#ededed" />
    <rect x={1902} y={457} width={1} height={500} fill="#d5d5d5" />
    {eqTicks.map(([y]) => <line key={y} x1={18} x2={1851} y1={y - .5} y2={y - .5} stroke="#c8c8c8" strokeDasharray="4 3" shapeRendering="crispEdges" />)}
    {gridX.map(x => <line key={x} x1={x} x2={x} y1={462} y2={843} stroke="#c8c8c8" strokeDasharray="4 3" shapeRendering="crispEdges" />)}
    {gridX.map(x => <line key={'s' + x} x1={x} x2={x} y1={846} y2={936} stroke="#c8c8c8" strokeDasharray="4 3" shapeRendering="crispEdges" />)}
    <path d={toD(equity)} fill="none" stroke="#1f8f1f" strokeWidth="1" />
    <path d={toD(balance)} fill="none" stroke="#00008b" strokeWidth="2.6" />
    <rect x={17.5} y={461.5} width={1834} height={381} fill="none" stroke="#111" strokeWidth="1" shapeRendering="crispEdges" />
    <rect x={17.5} y={844.5} width={1834} height={92} fill="none" stroke="#111" strokeWidth="1" shapeRendering="crispEdges" />
    <text y={476} fontSize="12.5">
      <tspan x={22} fill="#000080">Balance</tspan>
      <tspan fill="#222"> / </tspan>
      <tspan fill="#1f9a1f">Equity</tspan>
      <tspan fill="#222"> / </tspan>
      <tspan fill="#e01020">Open prices only (fastest method to analyze the bar just completed, only for EAs that explicitly control bar opening)</tspan>
    </text>
    <text x={22} y={859} fontSize="11.5" fill="#222">Size</text>
    {lowBars.map((x, i) => <line key={i} x1={x + .5} x2={x + .5} y1={894} y2={936} stroke="#229a22" shapeRendering="crispEdges" />)}
    {hiBars.map((x, i) => <line key={i} x1={x + .5} x2={x + .5} y1={851} y2={936} stroke="#1a8f1a" shapeRendering="crispEdges" />)}
    {eqTicks.map(([y, t]) => <text key={t} x={1857} y={y + 5} fontSize="12.5" fill="#222">{t}</text>)}
    <text x={1857} y={847} fontSize="12.5" fill="#222">42</text>
    <text x={18} y={952} fontSize="12.5" fill="#111">0</text>
    {xLabels.map((t, i) => <text key={t} x={56.5 + 40 * i} y={952} fontSize="12.5" fill="#111" textAnchor="end">{t}</text>)}
  </GraphSvg>
);

/* ============== taskbar icons ============== */
const T: React.FC<{ children: React.ReactNode; s?: number }> = ({ children, s = 32 }) => (
  <svg width={s} height={s} viewBox="0 0 32 32" fill="none">{children}</svg>
);
const chrome = (
  <>
    <circle cx="16" cy="16" r="15" fill="#e94235" />
    <path d="M16 16L29 23.5A15 15 0 0 1 8.500 29z" fill="#34a853" />
    <path d="M16 16L8.500 29A15 15 0 0 1 3 8.500z" fill="#34a853" />
    <path d="M16 16L29 8.500A15 15 0 0 1 16 31z" fill="#fbbc04" />
    <circle cx="16" cy="16" r="7.5" fill="#fff" /><circle cx="16" cy="16" r="5.8" fill="#4285f4" />
  </>
);
const task: React.ReactNode[] = [
  <T><circle cx="19" cy="13" r="7" stroke="#222" strokeWidth="1.5" /><path d="M14 18L5 28" stroke="#222" strokeWidth="1.8" /></T>,
  <T><circle cx="16" cy="16" r="15" fill="#1d7bc9" /><path d="M4 20C6 8 22 4 29 13c2 3 2 7-1 7H14c0 4 7 7 14 4-3 5-9 7-14 6C7 29 3 26 4 20z" fill="#3fd07e" /><path d="M3 20c1-7 8-11 13-7-4 1-7 4-6 9s6 8 11 8C11 32 3 28 3 20z" fill="#0f5fa8" /></T>,
  <T><rect x="1" y="1" width="26" height="30" rx="2" fill="#3a3a3a" /><path d="M27 14v12l-10 6v-6l4-12z" fill="#f9cf3b" /></T>,
  <T><path d="M9 8c0-8 14-8 14 0" stroke="#1b6fb8" strokeWidth="2" /><rect x="2" y="7" width="28" height="25" rx="3" fill="#14558f" /><rect x="10" y="13" width="5.5" height="5.5" fill="#f2542c" /><rect x="16.5" y="13" width="5.5" height="5.5" fill="#7fba00" /><rect x="10" y="19.5" width="5.5" height="5.5" fill="#00a4ef" /><rect x="16.5" y="19.5" width="5.5" height="5.5" fill="#ffb900" /></T>,
  <T><path d="M8 2l14 20" stroke="#bbb" strokeWidth="3.5" /><path d="M24 2L16 18" stroke="#d43c1e" strokeWidth="3.5" /><circle cx="10" cy="27" r="4" stroke="#1b63c4" strokeWidth="2.5" /><circle cx="22" cy="28" r="4" stroke="#1b63c4" strokeWidth="2.5" /><path d="M6 6c6-6 18-5 20 3" stroke="#d43c1e" strokeWidth="2.5" /></T>,
  <T><circle cx="16" cy="16" r="14" fill="#fff" stroke="#f29c1f" strokeWidth="3" /><path d="M11 8l13 8-13 8z" fill="#f29c1f" /></T>,
  <T><rect x="2" y="2" width="28" height="30" rx="2" fill="#fb8d70" /><path d="M5 4h3v4H5zM11 4h3v4h-3zM17 4h3v4h-3zM23 4h3v4h-3z" fill="#fff" /><path d="M2 10h28" stroke="#fff" /><path d="M16 15l8 6v8H8v-8z" fill="#fdbfad" /></T>,
  <T><path d="M3 2h26v21L16 33 3 23z" fill="#1fa98c" /><path d="M12 20V10h6a4 4 0 0 1 0 8h-3" stroke="#fff" strokeWidth="2.2" /></T>,
  <T><ellipse cx="16" cy="21" rx="9" ry="11" fill="#e7a42a" /><rect x="9" y="3" width="14" height="9" rx="2" transform="rotate(-8 16 8)" fill="#6b4a2a" /><circle cx="5" cy="20" r="3.5" fill="#222" /><circle cx="27" cy="20" r="3.5" fill="#222" /><path d="M7 14c4-9 14-9 18 0" stroke="#222" strokeWidth="2" /><ellipse cx="16" cy="24" rx="4" ry="5" fill="#5a2a10" /><circle cx="12" cy="16" r="2" fill="#fff" /><circle cx="20" cy="16" r="2" fill="#fff" /></T>,
  <T s={36}><path d="M5 9l7-5 6 3 7-5 6 4" stroke="#d9a04c" strokeWidth="1.6" /><path d="M5 13l7-5 6 3 7-5 6 4" stroke="#6fb45a" strokeWidth="1.6" /><path d="M5 17l7-5 6 3 7-5 6 4" stroke="#d66f6f" strokeWidth="1.6" /><text x="18" y="28" textAnchor="middle" fontSize="10.5" fill="#444" fontFamily={UI}>alpari</text></T>,
  <T><rect x="1" y="2" width="30" height="30" fill="#b71c1c" stroke="#d84a4a" strokeDasharray="2 1" /><text x="15" y="26" textAnchor="middle" fontSize="22" fontWeight="700" fontStyle="italic" fill="#fff" fontFamily={TXT}>Fz</text></T>,
  <T><rect x="4" y="2" width="26" height="21" rx="1" fill="#d8dfe8" stroke="#8a96a8" /><rect x="7" y="5" width="20" height="15" fill="#2a57c8" /><rect x="1" y="8" width="25" height="9" fill="#e9edf2" stroke="#6a7688" /><path d="M3 11h21M3 14h21" stroke="#6a7688" strokeDasharray="2 1" /><ellipse cx="17" cy="30" rx="8" ry="4" fill="#b9bec6" /></T>,
  <T><path d="M2 12L15 1l13 11v21H2z" fill="#df4b3c" /><circle cx="15" cy="12" r="8" fill="#fff" /><text x="15" y="17" textAnchor="middle" fontSize="14" fontWeight="700" fill="#d5402f" fontFamily={TXT}>G</text><circle cx="23" cy="26" r="9" fill="#ddd" stroke="#555" /><text x="23" y="31" textAnchor="middle" fontSize="13" fill="#111" fontFamily={TXT}>78</text></T>,
  <T><path d="M9 2l18 7v12l-16-2z" fill="#2f8fe8" stroke="#9ccff6" /><path d="M3 25l9-4 14 3-10 5z" fill="#d5d9de" stroke="#9aa0a8" /><path d="M12 19v3" stroke="#888" /></T>,
  <T s={30}><path d="M13 3h6l1 4 3 1.5 3.5-2 3 5-3 2.5v3.5l3 2.5-3 5-3.5-2-3 1.5-1 4h-6l-1-4-3-1.5-3.500 2-3-5 3-2.500V14L2 11.500l3-5 3.500 2 3-1.500z" fill="#3c3c3c" transform="scale(.95)" /><circle cx="15.5" cy="15.5" r="5.5" fill="#f2f2f2" /></T>,
  <T><path d="M3 4h17l6 6v22H3z" fill="#eef3e0" stroke="#9aa68a" /><path d="M6 18c0-6 4-8 8-8s8 3 8 8-4 10-8 10-8-4-8-10z" fill="#5cbd32" /><circle cx="11" cy="17" r="2" fill="#111" /><circle cx="17" cy="17" r="2" fill="#111" /><path d="M22 14L29 1" stroke="#c79a3a" strokeWidth="2.5" /></T>,
  <T>{chrome}</T>,
  <T>{chrome}<circle cx="23" cy="24" r="9" fill="#0d7d78" /><text x="23" y="28" textAnchor="middle" fontSize="11" fontWeight="700" fill="#e8fff8" fontFamily={TXT}>fx</text></T>,
  <T><path d="M2 5h11l3 3h14v24H2z" fill="#f6cf5f" /><path d="M2 5h11l3 3H2z" fill="#e8a92b" /><rect x="2" y="13" width="28" height="19" fill="#fbd96f" /><path d="M11 19h10v4h4v9h-5v-6h-8v6H7v-9h4z" fill="#2a8fd0" /></T>,
];

const App: React.FC = () => (
  <Page>
    <Global />
    <TitleBar>
      <TitleLogo>
        <svg width="20" height="22" viewBox="0 0 20 22" fill="none">
          <path d="M0 8l5-4 4 3 5-5 6-2v4l-6 3-5 4-4-3-5 4z" fill="#d9452e" />
          <path d="M0 12l5-4 4 3 5-5 6-2v4l-6 3-5 4-4-3-5 4z" fill="#e9a32b" />
          <path d="M0 16l5-4 4 3 5-5 6-2v4l-6 3-5 4-4-3-5 4z" fill="#6fae3c" />
          <path d="M0 20l5-4 4 3 5-5 6-2v4l-6 3-5 4-4-3-5 2z" fill="#3d8f3c" />
        </svg>
      </TitleLogo>
      <TitleText>5620483: Alpari-Standard3 - Alpari - [EURUSD,H1 (visual)]</TitleText>
      <WinControls>
        <WinBtn><svg width="12" height="12"><path d="M0 6.5h12" stroke="#777" /></svg></WinBtn>
        <WinBtn><svg width="12" height="14"><rect x=".5" y=".5" width="11" height="13" fill="none" stroke="#888" /></svg></WinBtn>
        <WinBtn><svg width="14" height="14"><path d="M1 0l12 14M13 0L1 14" stroke="#888" /></svg></WinBtn>
      </WinControls>
    </TitleBar>

    <MenuBar>
      <MenuIcon>
        <svg width="18" height="22" viewBox="0 0 18 22" fill="none"><rect x="1" y="4" width="15" height="15" rx="1" fill="#dfe9f5" stroke="#3f78c0" /><path d="M3 2h3v4H3zM8 2h3v4H8z" fill="#3f78c0" /><path d="M4 15v-4M8 15V9M12 15v-3" stroke="#3f78c0" /></svg>
      </MenuIcon>
      <MenuList>
        <span>File</span><span>View</span><span>Insert</span><span>Charts</span><span>Tools</span><span>Window</span><span>Help</span>
      </MenuList>
      <MdiBox>
        <svg width="8" height="10"><path d="M1 8h5" stroke="#777" strokeWidth="2" /></svg>
        <svg width="9" height="10"><rect x="1.5" y="2.5" width="5" height="6" fill="none" stroke="#777" /><path d="M3 1h5v6" stroke="#777" fill="none" /></svg>
        <svg width="8" height="10"><path d="M1 2l6 7M7 2L1 9" stroke="#666" strokeWidth="1.4" /></svg>
      </MdiBox>
    </MenuBar>

    <Row $h={34}>
      <Band $w={1048}><ToolItems items={row1} /></Band>
      <RightIcons>{icons.search}<Bell /></RightIcons>
    </Row>
    <Row $h={35}>
      <Band $w={675}><ToolItems items={row2} /></Band>
    </Row>

    <PriceChart />
    <ChartGap />

    <Tester>
      <Rail>
        <RailClose>×</RailClose>
        <RailLabel>Tester</RailLabel>
      </Rail>
      <TesterMain>
        <TestGraph />
        <Tabs>
          <Tab $w={78}>Settings</Tab>
          <Tab $w={71}>Results</Tab>
          <Tab $w={64} $on>Graph</Tab>
          <Tab $w={71.5}>Report</Tab>
          <Tab $w={71}>Journal</Tab>
        </Tabs>
      </TesterMain>
    </Tester>
    <Spacer />

    <StatusBar>
      <Cell $w={1016}>or Help, press F1</Cell>
      <Cell $w={149}>Default</Cell>
      <Cell $w={131} />
      <Cell $w={89} />
      <Cell $w={89} />
      <Cell $w={85} />
      <Cell $w={88} />
      <Cell $w={83} />
      <Cell $w={177}>
        <svg width="31" height="18" viewBox="0 0 31 18">
          {Array.from({ length: 12 }, (_, i) => (
            <g key={i}>
              <rect x={i * 2.6} y={0} width={1.8} height={18} fill="#6f8a14" />
              <rect x={i * 2.6} y={14 - i} width={1.8} height={4 + i} fill="#0f4f6f" />
            </g>
          ))}
        </svg>
        2433/10 kb
      </Cell>
      <ResizeGrip><svg width="12" height="12"><path d="M12 2L2 12M12 6L6 12M12 10l-2 2" stroke="#aaa" /></svg></ResizeGrip>
    </StatusBar>

    <Taskbar>
      <StartBtn>
        <svg width="20" height="20" viewBox="0 0 20 20"><path d="M0 2.5L8.5 1.3v8.2H0zM9.500 1.200L20 0v9.500H9.500zM0 10.500h8.500v8.200L0 17.500zM9.500 10.500H20V20L9.500 18.800z" fill="#111" /></svg>
      </StartBtn>
      {task.map((n, i) => <TaskItem key={i} $on={i === 4}>{n}</TaskItem>)}
      <Tray>
        <TrayItem $w={40}><svg width="18" height="12"><path d="M1 11l8-9 8 9" stroke="#222" strokeWidth="1.3" fill="none" /></svg></TrayItem>
        <TrayItem $w={40}><svg width="22" height="14"><path d="M4 0v3M7 0v3M2 3h7v3H2zM5.500 6v3" stroke="#111" fill="none" /><rect x="8" y="3" width="12" height="9" fill="#222" /><rect x="20" y="5" width="2" height="5" fill="#222" /></svg></TrayItem>
        <TrayItem $w={41}><svg width="18" height="18" fill="none"><path d="M2 14C2 8 7 3 14 2M6 15c0-4 3-7 8-8M10 16c0-2 2-4 5-5" stroke="#555" /><circle cx="14" cy="16" r="1.5" fill="#222" /></svg></TrayItem>
        <TrayItem $w={39}><svg width="20" height="18" fill="none"><path d="M1 6h3l5-4v14l-5-4H1z" stroke="#333" /><path d="M12 6c1 2 1 4 0 6M15 4c2 3 2 7 0 10" stroke="#666" /></svg></TrayItem>
        <TrayItem $w={44}>ENG</TrayItem>
        <Clock><span>5:03 AM</span><span>2/18/2023</span></Clock>
        <TrayItem $w={48}>
          <svg width="30" height="30" viewBox="0 0 30 30" fill="none"><path d="M3 2h20v18H3z" fill="#111" /><path d="M7 7h12M7 11h12M7 15h12" stroke="#fff" /><circle cx="20" cy="21" r="8" fill="#d8d8d8" stroke="#777" /><text x="20" y="25.5" textAnchor="middle" fontSize="12" fontWeight="700" fill="#222" fontFamily={TXT}>1</text></svg>
        </TrayItem>
      </Tray>
    </Taskbar>
  </Page>
);

export default App;
